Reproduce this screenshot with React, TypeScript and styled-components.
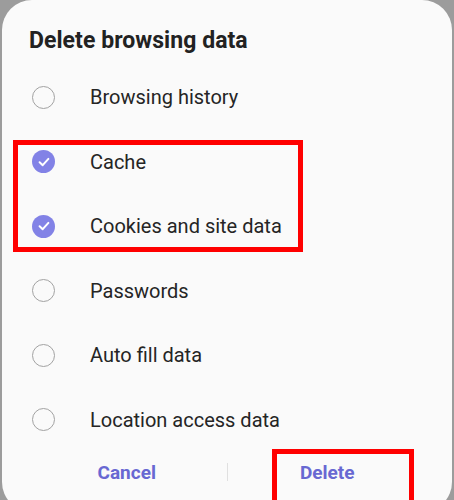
import React from "react";
import styled, { createGlobalStyle } from "styled-components";

const Global = createGlobalStyle`
  html, body {
    margin: 0;
    padding: 0;
    width: 454px;
    height: 500px;
    overflow: hidden;
    background: #9c9c9c;
    font-family: Roboto, "Noto Sans", Arial, sans-serif;
  }
`;

const Card = styled.div`
  margin: 0 2px;
  height: 512px;
  background: #fafafa;
  border-radius: 30px;
  display: flex;
  flex-direction: column;
`;

const Title = styled.h1`
  margin: 0;
  padding: 28px 0 11px 27px;
  font-size: 23px;
  line-height: 26px;
  font-weight: 700;
  color: #222222;
  letter-spacing: 0.05px;
`;

const List = styled.div`
  display: flex;
  flex-direction: column;
`;

const Group = styled.div`
  position: relative;
  display: flex;
  flex-direction: column;
`;

const Highlight = styled.div`
  position: absolute;
  left: 11px;
  top: 10.5px;
  width: 290px;
  height: 112px;
  box-sizing: border-box;
  border: 5px solid #ff0000;
  pointer-events: none;
`;

const Row = styled.div`
  height: 64.5px;
  display: flex;
  align-items: center;
  padding-left: 30px;
  gap: 35px;
`;

const Radio = styled.span<{ $checked?: boolean }>`
  width: 23px;
  height: 23px;
  box-sizing: border-box;
  border-radius: 50%;
  flex: none;
  display: flex;
  align-items: center;
  justify-content: center;
  border: ${(p) => (p.$checked ? "none" : "1.5px solid #a2a2a2")};
  background: ${(p) => (p.$checked ? "#8282e6" : "transparent")};
`;

const Label = styled.span`
  font-size: 20px;
  color: #252525;
  line-height: 24px;
`;

const Buttons = styled.div`
  display: flex;
  align-items: center;
  height: 40px;
  padding: 0 25px;
`;

const Button = styled.button`
  position: relative;
  flex: 1;
  height: 40px;
  border: none;
  background: transparent;
  font-family: Roboto, "Noto Sans", Arial, sans-serif;
  font-size: 19px;
  font-weight: 700;
  color: #6868d2;
  padding: 0;
`;

const Divider = styled.span`
  width: 1px;
  height: 18px;
  background: #e0e0e0;
  flex: none;
`;

const ButtonHighlight = styled.span`
  position: absolute;
  left: 44px;
  right: 13px;
  top: -3px;
  height: 70px;
  box-sizing: border-box;
  border: 5px solid #ff0000;
`;

const Check = () => (
  <svg width="14" height="14" viewBox="0 0 14 14">
    <path
      d="M2.6 7.3 L5.7 10.2 L11.4 3.9"
      fill="none"
      stroke="#ffffff"
      strokeWidth="2"
      strokeLinecap="round"
      strokeLinejoin="round"
    />
  </svg>
);

const Item = ({ label, checked }: { label: string; checked?: boolean }) => (
  <Row>
    <Radio $checked={checked}>{checked && <Check />}</Radio>
    <Label>{label}</Label>
  </Row>
);

export default function App() {
  return (
    <>
      <Global />
      <Card>
        <Title>Delete browsing data</Title>
        <List>
          <Item label="Browsing history" />
          <Group>
            <Item label="Cache" checked />
            <Item label="Cookies and site data" checked />
            <Highlight />
          </Group>
          <Item label="Passwords" />
          <Item label="Auto fill data" />
          <Item label="Location access data" />
        </List>
        <Buttons>
          <Button>Cancel</Button>
          <Divider />
          <Button>
            Delete
            <ButtonHighlight />
          </Button>
        </Buttons>
      </Card>
    </>
  );
}
